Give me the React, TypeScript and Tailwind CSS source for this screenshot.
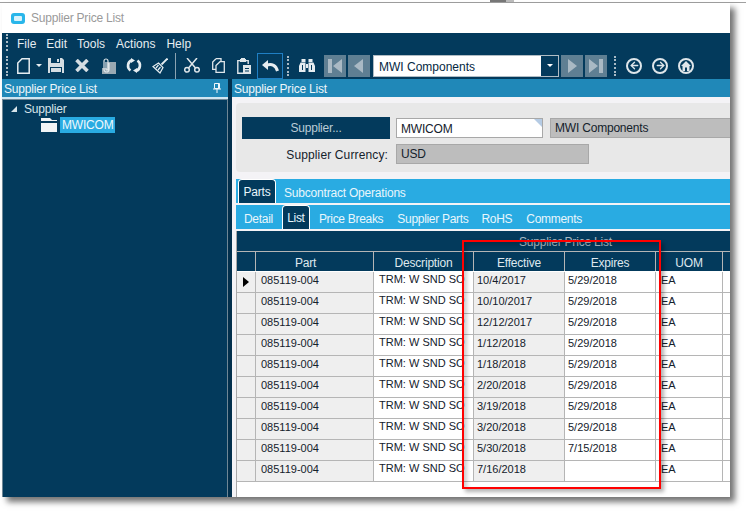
import React from "react";
import { ArrowLeft, ArrowRight } from "lucide-react";

const font = { fontFamily: '"Liberation Sans", Arial, sans-serif' };

const rows: [string, string][] = [
  ["10/4/2017", "5/29/2018"],
  ["10/10/2017", "5/29/2018"],
  ["12/12/2017", "5/29/2018"],
  ["1/12/2018", "5/29/2018"],
  ["1/18/2018", "5/29/2018"],
  ["2/20/2018", "5/29/2018"],
  ["3/19/2018", "5/29/2018"],
  ["3/20/2018", "5/29/2018"],
  ["5/30/2018", "7/15/2018"],
  ["7/16/2018", ""],
];

function Grip({ className = "" }: { className?: string }) {
  return <div className={`w-[2px] h-[20px] shrink-0 border-l-2 border-dotted border-[#a9bac5] ${className}`} />;
}

function NavBtn({ dir, edge, className = "" }: { dir: "l" | "r"; edge?: boolean; className?: string }) {
  return (
    <div className={`w-[22px] h-[22px] shrink-0 bg-[#5f7f93] flex items-center justify-center ${className}`}>
      <svg width="14" height="14" viewBox="0 0 14 14" fill="#a9b9c4">
        {dir === "l" ? (
          edge ? (
            <path d="M0 0h4v14H0zM14 0v14L5 7z" />
          ) : (
            <path d="M11 0v14L2 7z" />
          )
        ) : edge ? (
          <path d="M0 0v14l9-7zM10 0h4v14h-4z" />
        ) : (
          <path d="M3 0v14l9-7z" />
        )}
      </svg>
    </div>
  );
}

function CircleIcon({ children, className = "" }: { children: React.ReactNode; className?: string }) {
  return (
    <div className={`w-[16px] h-[16px] shrink-0 rounded-full border-2 border-[#dfe6ea] flex items-center justify-center text-[#dfe6ea] ${className}`}>
      {children}
    </div>
  );
}

function Head({ w, className = "", children }: { w: string; className?: string; children?: React.ReactNode }) {
  return (
    <div className={`${w} ${className} shrink-0 h-full flex items-center justify-center border-r border-[#b5b5b5] text-[#dfe8ee] pt-[2px]`}>{children}</div>
  );
}

export default function App() {
  return (
    <div className="relative w-[746px] h-[513px] bg-white overflow-hidden text-[12px] tracking-[-0.2px]" style={font}>
      <div className="h-[3px] bg-white border-b border-[#a0a0a0] flex items-end overflow-hidden text-[#333]">
        <span className="ml-[5px] text-[12px] leading-[12px] whitespace-nowrap">actor Usuario</span>
        <div className="ml-[416px] w-[16px] h-full bg-[#777] shrink-0" />
        <div className="w-[8px] h-full bg-[#bbb] shrink-0" />
      </div>
      <div className="ml-[2px] w-[728px] h-[494px] bg-white flex flex-col shadow-[5px_5px_6px_rgba(0,0,0,0.55)]">
        {/* title */}
        <div className="h-[30px] shrink-0 flex items-center pl-[9px] bg-white">
          <div className="w-[14px] h-[11px] rounded-[3px] bg-[#29b6ea] flex items-center justify-center">
            <div className="w-[8px] h-[5px] rounded-[1px] bg-[#d9f3fc]" />
          </div>
          <span className="ml-[6px] text-[#9a9a9a]">Supplier Price List</span>
        </div>
        {/* menu */}
        <div className="h-[19px] shrink-0 bg-[#033a5c] flex items-center pl-[4px] pt-[2px] text-[#e6edf1] tracking-[0px]">
          <Grip className="h-[13px]" />
          <span className="ml-[9px]">File</span>
          <span className="ml-[10px]">Edit</span>
          <span className="ml-[10px]">Tools</span>
          <span className="ml-[11px]">Actions</span>
          <span className="ml-[11px]">Help</span>
        </div>
        {/* toolbar */}
        <div className="h-[27px] shrink-0 bg-[#033a5c] flex items-center pl-[4px] text-[#dfe6ea]">
          <Grip />
          {/* new */}
          <svg className="ml-[9px] shrink-0" width="13" height="16" viewBox="0 0 13 16" fill="none" stroke="#e6edf1" strokeWidth="1.500">
            <path d="M5 .8h7.200v14.400H.8V5z" />
          </svg>
          <div className="ml-[6px] w-0 h-0 border-x-[3px] border-x-transparent border-t-[3px] border-t-[#e6edf1]" />
          {/* save */}
          <svg className="ml-[6px] shrink-0" width="16" height="15" viewBox="0 0 16 15" fill="#d5dde2">
            <path d="M0 0h14l2 2v13H0z" />
            <path d="M3 0h9v5H3zM2 9h12v6H2z" fill="#033a5c" />
            <path d="M9 1h2v3H9z" />
            <path d="M3 10h10v4H3z" fill="#d5dde2" />
          </svg>
          {/* delete */}
          <svg className="ml-[11px] shrink-0" width="14" height="13" viewBox="0 0 14 13" fill="none" stroke="#d5dde2" strokeWidth="3.600">
            <path d="M1.500 1 12.500 12M12.500 1 1.500 12" />
          </svg>
          {/* attach */}
          <svg className="ml-[12px] shrink-0" width="15" height="16" viewBox="0 0 15 16" fill="none">
            <path d="M6 4h9v12H1V10h5z" fill="#9aa9b3" />
            <path d="M8 5v6.500a2.500 2.500 0 0 1-5 0V3a2 2 0 0 1 4 0v8a1 1 0 0 1-2 0V4" stroke="#dfe6ea" strokeWidth="1.200" />
          </svg>
          {/* refresh */}
          <svg className="ml-[10px] shrink-0" width="16" height="15" viewBox="0 0 16 15" fill="none">
            <path d="M4.500 12.500A6 6 0 0 1 6 2M11.500 2.500A6 6 0 0 1 10 13" stroke="#e6edf1" strokeWidth="2.600" />
            <path d="M5 0 9 2.500 5 5zM11 10v5l-4-2.500z" fill="#e6edf1" />
          </svg>
          {/* broom */}
          <svg className="ml-[10px] shrink-0" width="16" height="16" viewBox="0 0 16 16" fill="none" stroke="#e6edf1" strokeWidth="1.200">
            <path d="M15.500.5 9.500 6.500" strokeWidth="1.800" />
            <path d="M6.500 5 11 9.500 8 15 1 8.500z" />
            <path d="M4 10l2.500-3M6 12l2.500-3" />
          </svg>
          <div className="ml-[7px] w-px h-[26px] bg-[#8ba3b2] shrink-0" />
          {/* scissors */}
          <svg className="ml-[8px] shrink-0" width="16" height="15" viewBox="0 0 16 15" fill="none" stroke="#dfe6ea" strokeWidth="1.500">
            <circle cx="3" cy="11.800" r="2.300" />
            <circle cx="13" cy="11.800" r="2.300" />
            <path d="M4.500 10 13 0M11.500 10 3 0" />
          </svg>
          {/* copy */}
          <svg className="ml-[12px] shrink-0" width="13" height="15" viewBox="0 0 13 15" fill="none" stroke="#dfe6ea" strokeWidth="1.300">
            <path d="M4 .7h5v3M4 .7 .7 4v7.300H4" />
            <path d="M8 3.700h4.300v10.600H4V7.500z" />
          </svg>
          {/* paste */}
          <svg className="ml-[12px] shrink-0" width="14" height="16" viewBox="0 0 14 16" fill="none">
            <path d="M3 2.600H.8v12.600H6M9 2.600h2.200V6" stroke="#dfe6ea" strokeWidth="1.400" />
            <path d="M4 0h4v1h1v3H3V1h1z" fill="#dfe6ea" />
            <path d="M6 7h8v9H6z" fill="#dfe6ea" />
            <path d="M8 10h4v1H8zM8 12.500h4v1H8z" fill="#033a5c" />
          </svg>
          {/* undo */}
          <div className="ml-[6px] w-[26px] h-[26px] shrink-0 border border-[#1f7fc4] flex items-center justify-center">
            <svg width="17" height="12" viewBox="0 0 17 12" fill="none">
              <path d="M0 5 6 0v10z" fill="#e6edf1" />
              <path d="M5 5c5-1.500 9 .5 10.500 6" stroke="#e6edf1" strokeWidth="3" />
            </svg>
          </div>
          <Grip className="ml-[4px]" />
          {/* binoculars */}
          <svg className="ml-[10px] shrink-0" width="16" height="13" viewBox="0 0 16 13" fill="#e6edf1">
            <path d="M2.500 0h4v3h-4zM9.500 0h4v3h-4zM1.500 3.500h5V13H0V7zM9.500 3.500h5L16 7v6H9.500zM7 5h2v4H7z" />
            <path d="M3 6h1v5H3zM12 6h1v5h-1z" fill="#033a5c" />
          </svg>
          <NavBtn dir="l" edge className="ml-[9px]" />
          <NavBtn dir="l" className="ml-[2px]" />
          <div className="ml-[3px] w-[186px] h-[22px] shrink-0 bg-white border border-[#b0bcc4] flex items-center text-[#05273f]">
            <span className="pl-[5px] flex-1 pt-[2px] tracking-[0px]">MWI Components</span>
            <div className="w-[17px] h-full bg-[#033a5c] flex items-center justify-center">
              <div className="w-0 h-0 border-x-[3px] border-x-transparent border-t-[3px] border-t-white" />
            </div>
          </div>
          <NavBtn dir="r" className="ml-[2px]" />
          <NavBtn dir="r" edge className="ml-[2px]" />
          <Grip className="ml-[7px]" />
          <CircleIcon className="ml-[10px]"><ArrowLeft size={11} strokeWidth={3} /></CircleIcon>
          <CircleIcon className="ml-[10px]"><ArrowRight size={11} strokeWidth={3} /></CircleIcon>
          <CircleIcon className="ml-[10px]">
            <svg width="10" height="10" viewBox="0 0 10 10" fill="#dfe6ea"><path d="M5 0 10 5H8.500v5H6V6.500H4V10H1.500V5H0z" /></svg>
          </CircleIcon>
        </div>
        {/* body */}
        <div className="flex-1 flex min-h-0 bg-[#022f4c]">
          {/* left */}
          <div className="w-[226px] shrink-0 flex flex-col">
            <div className="h-[18px] shrink-0 bg-[#2088b8] flex items-center justify-between pl-[2px] pr-[7px] text-[#eef6fa]">
              <span className="pt-[1px]">Supplier Price List</span>
              <svg width="8" height="10" viewBox="0 0 8 10" fill="none" stroke="#eef6fa">
                <path d="M1.500.5h5v5h-5zM0 6h8M4 6v4M5.500 1v4" />
              </svg>
            </div>
            <div className="h-[2px] shrink-0 bg-[#cfe6f2]" />
            <div className="flex-1 bg-[#033a5c] border-x border-t border-[#6f8796] text-[#d8e4ea]">
              <div className="flex items-center h-[15px] pl-[8px] mt-[1px]">
                <div className="w-0 h-0 border-l-[6px] border-l-transparent border-b-[6px] border-b-[#d8e4ea]" />
                <span className="ml-[7px]">Supplier</span>
              </div>
              <div className="flex items-center h-[17px] pl-[38px]">
                <svg width="19" height="14" viewBox="0 0 19 14" fill="#f1f4f6"><path d="M0 0h9l2 2h5v1H0zM0 5h16v9H0z" /></svg>
                <span className="h-[16px] px-[2px] flex items-center bg-[#29abe2] text-[#eef8fc]">MWICOM</span>
              </div>
            </div>
          </div>
          <div className="w-[4px] shrink-0 bg-[#022f4c]" />
          {/* right */}
          <div className="flex-1 min-w-0 flex flex-col bg-[#f4f3f6]">
            <div className="h-[18px] shrink-0 bg-[#2088b8] flex items-center pl-[2px] pt-[1px] text-[#eef6fa]">Supplier Price List</div>
            <div className="mt-[6px] ml-[4px] h-[69px] shrink-0 bg-[#e8e8e8] rounded-l-[4px] pt-[14px] pl-[6px] text-[#14212b]">
              <div className="flex items-center h-[22px]">
                <div className="w-[148px] h-[22px] bg-[#033a5c] text-[#b9cbd6] flex items-center justify-center">Supplier...</div>
                <div className="relative ml-[6px] w-[147px] h-[20px] bg-white border border-[#a8a8a8] flex items-center pl-[4px] pt-[1px]">
                  MWICOM
                  <div className="absolute right-0 top-0 w-0 h-0 border-l-[8px] border-l-transparent border-t-[8px] border-t-[#b5cbe4]" />
                </div>
                <div className="ml-[7px] flex-1 h-[20px] bg-[#bdbdbd] border border-[#a8a8a8] border-r-0 flex items-center pl-[4px]">MWI Components</div>
              </div>
              <div className="flex items-center h-[20px] mt-[5px]">
                <div className="w-[146px] text-right tracking-[0.13px] pt-[1px]">Supplier Currency:</div>
                <div className="ml-[8px] w-[193px] h-[20px] bg-[#bdbdbd] border border-[#a8a8a8] flex items-center pl-[4px]">USD</div>
              </div>
            </div>
            <div className="mt-[7px] ml-[4px] h-[24px] shrink-0 bg-[#29abe2] flex items-end pl-[2px] text-[#e8f6fc]">
              <div className="h-[24px] w-[38px] bg-[#033a5c] border-x border-t border-white rounded-t-[4px] flex items-center justify-center">Parts</div>
              <span className="ml-[8px] pb-[1px]">Subcontract Operations</span>
            </div>
            <div className="mt-[2px] ml-[4px] h-[24px] shrink-0 bg-[#29abe2] flex items-end pl-[8px] text-[#e8f6fc] tracking-[-0.3px]">
              <span className="pb-[1px]">Detail</span>
              <div className="ml-[9px] h-[24px] w-[28px] bg-[#033a5c] border-x border-t border-white rounded-t-[4px] flex items-center justify-center">List</div>
              <span className="ml-[9px] pb-[1px]">Price Breaks</span>
              <span className="ml-[14px] pb-[1px]">Supplier Parts</span>
              <span className="ml-[13px] pb-[1px]">RoHS</span>
              <span className="ml-[14px] pb-[1px]">Comments</span>
            </div>
            {/* grid */}
            <div className="mt-[2px] ml-[4px] flex-1 min-h-0 bg-white border-l border-[#a8a8a8] overflow-hidden">
              <div className="h-[20px] bg-[#033a5c] flex items-center text-[#a9bac5] pl-[282px] pt-[2px]">Supplier Price List</div>
              <div className="h-[20px] bg-[#033a5c] border-t border-[#b5b5b5] flex">
                <Head w="w-[19px]" />
                <Head w="w-[118px]" className="pr-[18px]">Part</Head>
                <Head w="w-[100px]">Description</Head>
                <Head w="w-[91px]">Effective</Head>
                <Head w="w-[91px]">Expires</Head>
                <Head w="w-[67px]">UOM</Head>
              </div>
              {rows.map(([eff, exp], i) => (
                <div key={i} className={`h-[21px] flex border-b border-[#b5b5b5] text-[11px] tracking-[0px] text-[#14212b] ${i === 0 ? "mt-px" : ""}`}>
                  <div className="w-[19px] shrink-0 bg-[#efefef] border-r border-[#b5b5b5] flex items-center justify-center">
                    {i === 0 && <div className="w-0 h-0 border-y-[5px] border-y-transparent border-l-[6px] border-l-black" />}
                  </div>
                  <div className="w-[118px] shrink-0 bg-[#efefef] border-r border-[#b5b5b5] flex items-center pl-[5px] pb-[3px]">085119-004</div>
                  <div className="w-[100px] shrink-0 bg-white border-r border-[#b5b5b5] whitespace-nowrap pl-[5px] pt-[1px] leading-[13px]">TRM: W SND SO</div>
                  <div className="w-[91px] shrink-0 bg-[#efefef] border-r border-[#b5b5b5] flex items-center pl-[3px] pb-[3px]">{eff}</div>
                  <div className="w-[91px] shrink-0 bg-white border-r border-[#b5b5b5] flex items-center pl-[3px] pb-[3px]">{exp}</div>
                  <div className="w-[67px] shrink-0 bg-white border-r border-[#b5b5b5] flex items-center pl-[5px] pb-[3px]">EA</div>
                  <div className="flex-1 bg-white" />
                </div>
              ))}
            </div>
          </div>
        </div>
      </div>
      {/* annotation */}
      <div className="absolute left-[462px] top-[240px] w-[199px] h-[249px] border-2 border-[#ff0000] shadow-[3px_3px_4px_rgba(0,0,0,0.3),inset_3px_3px_4px_rgba(0,0,0,0.2)]" />
    </div>
  );
}
